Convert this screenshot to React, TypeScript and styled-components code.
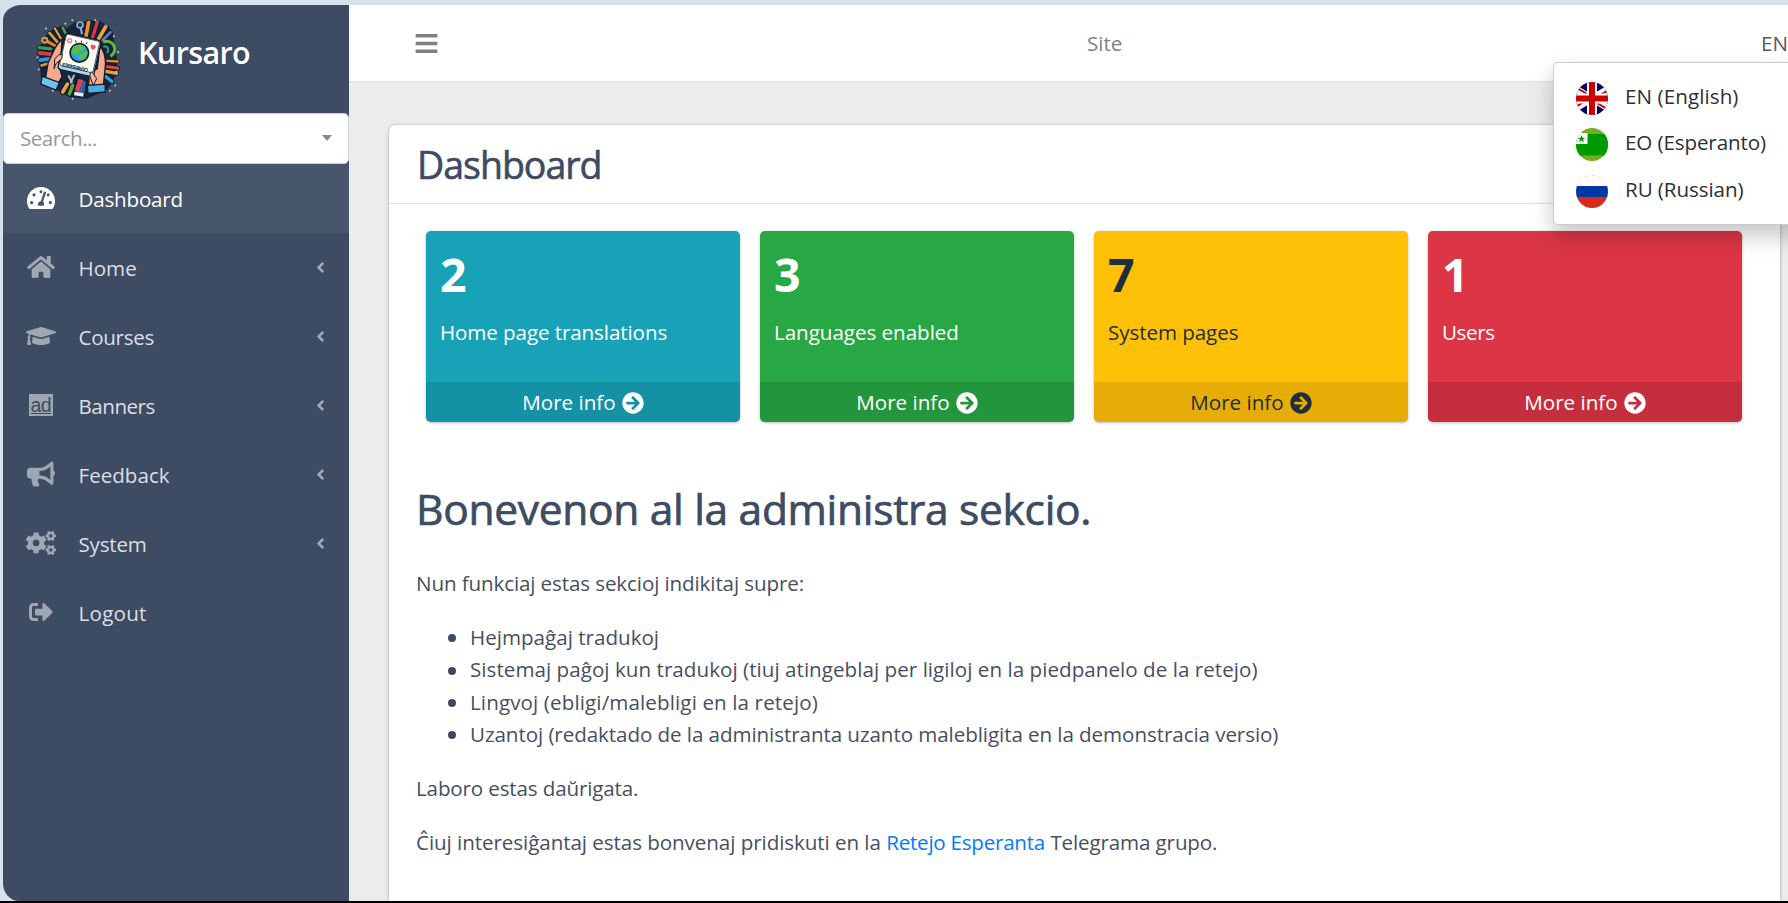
import React from "react";
import styled, { createGlobalStyle } from "styled-components";
import {
  FaTachometerAlt, FaHome, FaGraduationCap, FaBullhorn, FaCogs, FaSignOutAlt,
  FaAngleLeft, FaBars, FaArrowCircleRight,
} from "react-icons/fa";

const GlobalStyle = createGlobalStyle`
  *, *::before, *::after { box-sizing: border-box; }
  html, body { margin: 0; overflow: hidden; }
  body {
    font-family: "Open Sans", "Noto Sans", sans-serif;
    font-size: 20.6px;
    line-height: 32.4px;
    color: #3d4b63;
    background: #d7e1e9;
  }
  h1, h2, p, ul { margin: 0; }
  a { text-decoration: none; color: inherit; }
`;

const Text = styled.span<{ $ls?: number }>`
  display: inline-block;
  white-space: nowrap;
  letter-spacing: ${p => p.$ls ?? 0}px;
`;

const Viewport = styled.div`
  position: relative;
  width: 1788px;
  height: 903px;
  overflow: hidden;
`;

const Frame = styled.div`
  height: 903px;
  padding: 5px 0 0 3px;
  display: flex;
  overflow: hidden;
  background: #d7e1e9;
  border-bottom: 2px solid #000;
`;

const Sidebar = styled.aside`
  width: 346px;
  flex: none;
  display: flex;
  flex-direction: column;
  background: #3d4b63;
  border-radius: 18px 0 0 16px / 15px 0 0 18px;
`;

const Brand = styled.a`
  height: 108px;
  display: flex;
  align-items: flex-start;
  padding: 12px 0 0 32px;
  color: #fff;
  font-size: 30.5px;
  font-weight: 600;
`;

const BrandName = styled.div`
  margin: 19px 0 0 18px;
`;

const SearchBox = styled.div`
  height: 51px;
  flex: none;
  display: flex;
  align-items: center;
  justify-content: space-between;
  padding: 0 16px;
  background: #fff;
  border: 1px solid #ced4da;
  border-radius: 5px;
  color: #999;
`;

const Caret = styled.span`
  border: 5px solid transparent;
  border-top: 6px solid #888;
  border-bottom: 0;
  margin-top: -2px;
`;

const NavItem = styled.a<{ $active?: boolean }>`
  height: 69px;
  flex: none;
  display: flex;
  align-items: center;
  padding: 0 24px 0 22px;
  color: ${p => (p.$active ? "#fff" : "#dcdfe3")};
  background: ${p => (p.$active ? "#48566c" : "transparent")};
`;

const NavIcon = styled.span<{ $active?: boolean }>`
  width: 32px;
  margin: ${p => (p.$active ? -2 : -1)}px 22px 0 -0.5px;
  display: flex;
  justify-content: center;
  color: ${p => (p.$active ? "#fff" : "#9fa7b3")};
`;

const NavLabel = styled.span<{ $active?: boolean }>`
  flex: 1;
  padding-top: ${p => (p.$active ? 2 : 1)}px;
`;

const Arrow = styled(FaAngleLeft)`
  color: #a3abb6;
  font-size: 17px;
  margin: -1px -4px 0 0;
`;

const Main = styled.main`
  flex: 1;
  min-width: 0;
  display: flex;
  flex-direction: column;
  background: #ebecee;
`;

const TopBar = styled.header`
  height: 77px;
  flex: none;
  display: grid;
  grid-template-columns: 673px 1fr auto;
  align-items: center;
  padding: 0 0 0 65px;
  background: #fff;
  border-bottom: 1px solid #dcdee1;
  color: #7f7f88;
  white-space: nowrap;
`;

const SiteLink = styled.a`
  color: #7f7f88;
`;

const LangLink = styled.a`
  width: 27px;
  overflow: hidden;
  color: #55585f;
`;

const Card = styled.section`
  flex: 1;
  margin: 43px 8px 0 40px;
  background: #fff;
  border-radius: 6px 6px 0 0;
  box-shadow: 0 0 2px rgba(0, 0, 0, 0.2), 0 1px 4px rgba(0, 0, 0, 0.2);
`;

const CardHeader = styled.div`
  height: 79px;
  display: flex;
  align-items: center;
  padding: 2px 28px 0;
  border-bottom: 1px solid #dfdfdf;
`;

const CardTitle = styled.h1`
  font-size: 37.5px;
  font-weight: 400;
  -webkit-text-stroke: 0.6px currentColor;
`;

const Boxes = styled.div`
  display: grid;
  grid-template-columns: repeat(4, 314px);
  gap: 20px;
  padding: 27px 0 0 37px;
`;

const Box = styled.article<{ $bg: string; $fg: string }>`
  height: 191px;
  display: flex;
  flex-direction: column;
  border-radius: 5px;
  overflow: hidden;
  background: ${p => p.$bg};
  color: ${p => p.$fg};
  box-shadow: 0 0 1px rgba(0, 0, 0, 0.13), 0 1px 3px rgba(0, 0, 0, 0.25);
`;

const BoxBody = styled.div`
  flex: 1;
  padding: 14px 14px 0;
`;

const BoxNumber = styled.div`
  font-size: 46.5px;
  line-height: 58px;
  font-weight: 700;
`;

const BoxLabel = styled.div`
  margin-top: 13px;
`;

const BoxFooter = styled.a`
  height: 40px;
  display: flex;
  align-items: center;
  justify-content: center;
  gap: 6px;
  background: rgba(0, 0, 0, 0.1);
`;

const FooterText = styled.span`
  padding-top: 1px;
`;

const RoundArrow = styled(FaArrowCircleRight)`
  font-size: 22px;
  margin-top: 1px;
`;

const Article = styled.div`
  padding: 0 27px;
`;

const Heading = styled.h2`
  margin-top: 61px;
  font-size: 42.5px;
  line-height: 52px;
  font-weight: 400;
  -webkit-text-stroke: 0.7px currentColor;
`;

const Paragraph = styled.p<{ $top: number }>`
  margin-top: ${p => p.$top}px;
  color: #474f5f;
`;

const List = styled.ul`
  margin-top: 21.6px;
  padding: 0;
  list-style: none;
`;

const ListItem = styled.li`
  display: flex;
  align-items: center;
  padding-left: 32px;
  color: #474f5f;
  &::before {
    content: "";
    width: 8px;
    height: 8px;
    margin: 2px 14px 0 0;
    border-radius: 50%;
    background: #3d4b63;
  }
`;

const Link = styled.a`
  color: #007bff;
`;

const Menu = styled.div`
  position: absolute;
  left: 1553px;
  top: 62px;
  width: 260px;
  height: 163px;
  padding: 12px 0 0 22px;
  display: flex;
  flex-direction: column;
  background: #fff;
  border: 1px solid rgba(0, 0, 0, 0.2);
  border-radius: 5px;
  box-shadow: 0 11px 22px rgba(0, 0, 0, 0.22);
  color: #2b3035;
`;

const MenuItem = styled.a`
  height: 46.6px;
  display: flex;
  align-items: center;
  gap: 17px;
`;

const MenuText = styled.span`
  margin-top: -5px;
`;

const tools: [number, number, number, number, number, string][] = [
  [72, 88, 104, 106, 9, "#e98a1c"], [88, 68, 112, 96, 8, "#d8a23a"], [104, 54, 122, 84, 6, "#e9b04a"],
  [128, 52, 140, 76, 8, "#49a04e"], [206, 36, 198, 78, 11, "#e9952a"], [232, 36, 218, 82, 10, "#d8374a"],
  [258, 48, 236, 86, 11, "#f0a33a"], [272, 66, 248, 90, 8, "#6a78c8"], [58, 112, 92, 116, 10, "#3aa055"],
  [58, 128, 90, 132, 11, "#d83b4d"], [60, 150, 86, 146, 11, "#2e9bd8"], [64, 166, 84, 160, 8, "#e3983a"],
  [262, 152, 294, 154, 7, "#d88c36"], [262, 170, 294, 174, 9, "#e04a3d"], [258, 184, 290, 190, 10, "#eba32e"],
  [258, 200, 276, 214, 10, "#2fa4d8"],
];

const stars: [number, number][] = [
  [157, 30], [78, 55], [226, 30], [282, 78], [295, 126], [52, 142], [56, 178], [98, 242], [286, 226], [270, 242],
  [136, 40], [158, 266], [290, 184],
];

const Logo = () => (
  <svg width="85" height="83" viewBox="45 20 255 250">
    <path d="M60 108 L72 80 L98 56 L128 46 L140 54 L166 34 L190 36 L206 30 L240 32 L262 44 L278 66 L286 110 L292 150 L292 190 L262 240 L200 266 L150 262 L110 240 L64 222 L58 150Z" fill="#17243c" />
    <g strokeLinecap="round">
      {tools.map(([x1, y1, x2, y2, w, c], i) => (
        <g key={i}>
          <line x1={x1} y1={y1} x2={x2} y2={y2} stroke="#0e1a2c" strokeWidth={w + 5} />
          <line x1={x1} y1={y1} x2={x2} y2={y2} stroke={c} strokeWidth={w} />
        </g>
      ))}
    </g>
    <path d="M232 36 l3 -5 M258 46 l3 -5" stroke="#5a63c0" strokeWidth="8" />
    <circle cx="180" cy="44" r="9" fill="#1c3a56" stroke="#8fb4cc" strokeWidth="5" />
    <path d="M182 52 L186 72" stroke="#8fb4cc" strokeWidth="6" />
    <circle cx="74" cy="90" r="8" fill="#24507a" stroke="#e8a13a" strokeWidth="5" />
    <path d="M250 96 a22 22 0 0 1 22 42" fill="none" stroke="#64b83c" strokeWidth="9" />
    <path d="M250 110 a10 10 0 0 1 10 18" fill="none" stroke="#3aa08c" strokeWidth="6" />
    <g stroke="#141c2c" strokeWidth="4" strokeLinejoin="round">
      <path d="M76 204 L84 158 L100 124 Q112 96 126 88 L120 178 L126 200 L112 222Z" fill="#f3ab8c" />
      <path d="M240 108 Q256 124 257 160 L250 230 L206 226 L208 190 L232 176Z" fill="#f3ab8c" />
      <path d="M66 198 L118 218 L108 240 L62 222Z" fill="#6cc3ec" />
      <path d="M202 226 L256 222 L256 246 L204 250Z" fill="#49b1e6" />
      <rect x="124" y="78" width="110" height="112" rx="10" transform="rotate(13 178 132)" fill="#9fdcf2" />
      <rect x="127" y="81" width="103" height="97" rx="7" transform="rotate(13 178 132)" fill="#fbfbf6" strokeWidth="2" />
      <circle cx="178" cy="128" r="28" fill="#2f9fe3" strokeWidth="5" />
    </g>
    <path d="M160 108 L180 102 L196 110 L190 120 L178 124 L174 136 L153 126Z M184 130 L204 124 L198 144 L186 150 L174 142Z" fill="#5bbf45" />
    <path d="M166 90 l4 7 M184 91 v8 M202 96 l-4 6" fill="none" stroke="#333b49" strokeWidth="3" />
    <path d="M212 106 q5 -7 9 0 q8 -3 6 6 l-8 8 q-8 -7 -7 -14Z" fill="#f0485a" />
    <circle cx="149" cy="91" r="6" fill="none" stroke="#e87a82" strokeWidth="4" />
    <text transform="translate(125 168) rotate(13)" fontFamily="Liberation Sans, sans-serif" fontSize="16" fontWeight="700" textLength="80" fill="#20283a">ESPERANTO</text>
    <g stroke="#141c2c" strokeWidth="3" strokeLinejoin="round">
      <path d="M104 146 Q116 130 127 132 L125 146 L108 160 L102 176Z" fill="#f7b697" />
      <path d="M210 200 Q210 178 220 190 L230 206 L220 226Z" fill="#f7b697" />
    </g>
    <g strokeLinecap="round">
      <path d="M146 198 L158 222 M162 196 L150 222" stroke="#a9c2cf" strokeWidth="6" />
      <path d="M128 246 L142 222" stroke="#0e1a2c" strokeWidth="17" />
      <path d="M128 246 L142 222" stroke="#f0a132" strokeWidth="11" />
      <path d="M148 252 L158 226" stroke="#0e1a2c" strokeWidth="16" />
      <path d="M148 252 L158 226" stroke="#5fae3b" strokeWidth="10" />
    </g>
    <path d="M172 204 L200 212 L194 258 L162 256Z" fill="#2c62ae" stroke="#0e1a2c" strokeWidth="4" />
    <path d="M176 207 L190 210 L176 246 L164 240Z" fill="#dd4352" />
    <path d="M163 246 L190 249 L190 260 L162 256Z" fill="#e9eef2" />
    {stars.map(([x, y], i) => <circle key={i} cx={x} cy={y} r="3" fill="#b9cde0" />)}
  </svg>
);

const AdIcon = () => (
  <svg width="24" height="22" viewBox="0 0 24 22">
    <rect width="24" height="22" fill="#9fa7b3" />
    <text x="1.5" y="17.5" fontFamily="Liberation Sans, sans-serif" fontSize="19.5" textLength="21" fill="#3d4b63">ad</text>
    <rect x="2" y="19" width="20" height="1" fill="#3d4b63" />
  </svg>
);

const Flag = ({ kind }: { kind: "en" | "eo" | "ru" }) => (
  <svg width="32" height="33" viewBox="0 0 32 33">
    <defs><clipPath id={`round-${kind}`}><ellipse cx="16" cy="16.5" rx="16" ry="16.5" /></clipPath></defs>
    <g clipPath={`url(#round-${kind})`}>
      {kind === "en" && (
        <>
          <rect width="32" height="33" fill="#006" />
          <path d="M-8 2 L40 31 M40 2 L-8 31" stroke="#fff" strokeWidth="6.5" />
          <path d="M-8 0.5 L16 15 M40 32.5 L16 18 M40 3.5 L16 18 M-8 29.5 L16 15" stroke="#c00" strokeWidth="2" />
          <path d="M16 0 V33 M0 16.5 H32" stroke="#fff" strokeWidth="10" />
          <path d="M16 0 V33 M0 16.5 H32" stroke="#c00" strokeWidth="6" />
        </>
      )}
      {kind === "eo" && (
        <>
          <rect width="32" height="33" fill="#73ad21" />
          <rect y="6" width="32" height="21.5" fill="#090" />
          <rect y="5" width="11.5" height="11" fill="#fff" />
          <path d="M5.5 7 L6.5 9.8 H9.3 L7 11.5 L8 14.3 L5.5 12.6 L3 14.3 L4 11.5 L1.7 9.8 H4.5Z" fill="#090" />
        </>
      )}
      {kind === "ru" && (
        <>
          <rect width="32" height="33" fill="#fff" />
          <path d="M3 7 Q8 0.5 16 0.5 Q24 0.5 29 7" fill="none" stroke="#cfe0a8" strokeWidth="0.8" strokeDasharray="5 2" />
          <rect y="11" width="32" height="11" fill="#0039a6" />
          <rect y="22" width="32" height="11" fill="#d52b1e" />
        </>
      )}
    </g>
  </svg>
);

const nav = [
  { label: "Dashboard", ls: -0.2, icon: <FaTachometerAlt size={28} />, active: true },
  { label: "Home", ls: 0, icon: <FaHome size={28} />, more: true },
  { label: "Courses", ls: -0.3, icon: <FaGraduationCap size={30} />, more: true },
  { label: "Banners", ls: -0.5, icon: <AdIcon />, more: true },
  { label: "Feedback", ls: 0, icon: <FaBullhorn size={28} />, more: true },
  { label: "System", ls: -0.2, icon: <FaCogs size={30} />, more: true },
  { label: "Logout", ls: 0.25, icon: <FaSignOutAlt size={24} /> },
];

const stats = [
  { n: "2", label: "Home page translations", ls: -0.1, bg: "#17a2b8", fg: "#fff" },
  { n: "3", label: "Languages enabled", ls: -0.04, bg: "#28a745", fg: "#fff" },
  { n: "7", label: "System pages", ls: -0.08, bg: "#ffc107", fg: "#1f2d3d" },
  { n: "1", label: "Users", ls: -0.4, bg: "#dc3545", fg: "#fff" },
];

const sections = [
  { text: "Hejmpaĝaj tradukoj", ls: 0 },
  { text: "Sistemaj paĝoj kun tradukoj (tiuj atingeblaj per ligiloj en la piedpanelo de la retejo)", ls: 0.035 },
  { text: "Lingvoj (ebligi/malebligi en la retejo)", ls: 0.11 },
  { text: "Uzantoj (redaktado de la administranta uzanto malebligita en la demonstracia versio)", ls: -0.08 },
];

const languages = [
  { kind: "en", label: "EN (English)", ls: 0.08 },
  { kind: "eo", label: "EO (Esperanto)", ls: -0.12 },
  { kind: "ru", label: "RU (Russian)", ls: -0.08 },
] as const;

export default function App() {
  return (
    <Viewport>
      <GlobalStyle />
      <Frame>
        <Sidebar>
          <Brand><Logo /><BrandName><Text $ls={-0.6}>Kursaro</Text></BrandName></Brand>
          <SearchBox><Text $ls={-0.5}>Search...</Text><Caret /></SearchBox>
          {nav.map(n => (
            <NavItem key={n.label} $active={n.active}>
              <NavIcon $active={n.active}>{n.icon}</NavIcon>
              <NavLabel $active={n.active}><Text $ls={n.ls}>{n.label}</Text></NavLabel>
              {n.more && <Arrow />}
            </NavItem>
          ))}
        </Sidebar>
        <Main>
          <TopBar>
            <FaBars size={25} />
            <SiteLink><Text>Site</Text></SiteLink>
            <LangLink><Text>EN</Text></LangLink>
          </TopBar>
          <Card>
            <CardHeader><CardTitle><Text $ls={-1}>Dashboard</Text></CardTitle></CardHeader>
            <Boxes>
              {stats.map(s => (
                <Box key={s.n} $bg={s.bg} $fg={s.fg}>
                  <BoxBody>
                    <BoxNumber>{s.n}</BoxNumber>
                    <BoxLabel><Text $ls={s.ls}>{s.label}</Text></BoxLabel>
                  </BoxBody>
                  <BoxFooter><FooterText><Text>More info</Text></FooterText><RoundArrow /></BoxFooter>
                </Box>
              ))}
            </Boxes>
            <Article>
              <Heading><Text $ls={-0.31}>Bonevenon al la administra sekcio.</Text></Heading>
              <Paragraph $top={32}><Text $ls={-0.12}>Nun funkciaj estas sekcioj indikitaj supre:</Text></Paragraph>
              <List>
                {sections.map(s => <ListItem key={s.text}><Text $ls={s.ls}>{s.text}</Text></ListItem>)}
              </List>
              <Paragraph $top={21.6}><Text $ls={-0.15}>Laboro estas daŭrigata.</Text></Paragraph>
              <Paragraph $top={21.6}>
                <Text $ls={-0.07}>Ĉiuj interesiĝantaj estas bonvenaj pridiskuti en la</Text>{" "}
                <Link><Text $ls={-0.25}>Retejo Esperanta</Text></Link>{" "}
                <Text $ls={-0.14}>Telegrama grupo.</Text>
              </Paragraph>
            </Article>
          </Card>
        </Main>
      </Frame>
      <Menu>
        {languages.map(l => (
          <MenuItem key={l.kind}>
            <Flag kind={l.kind} />
            <MenuText><Text $ls={l.ls}>{l.label}</Text></MenuText>
          </MenuItem>
        ))}
      </Menu>
    </Viewport>
  );
}
